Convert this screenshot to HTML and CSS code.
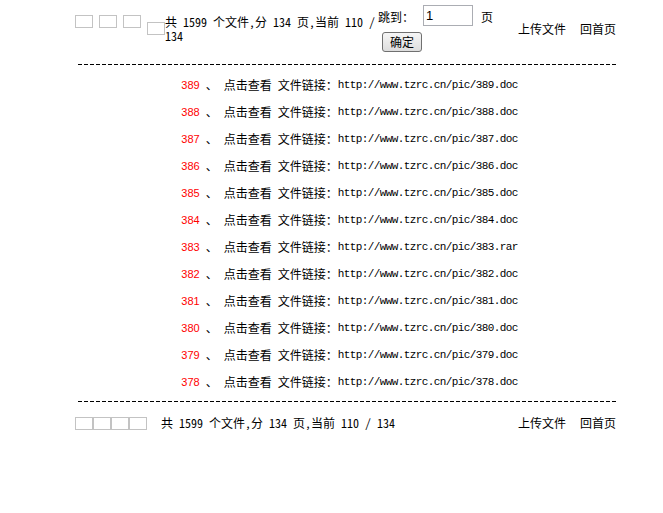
FILE: index.html
```html
<!DOCTYPE html>
<html>
<head>
<meta charset="utf-8">
<title>文件列表</title>
<link rel="stylesheet" href="styles.css">
</head>
<body>
<div class="page">
  <div class="top">
    <div class="pager">
      <span class="img"></span><span class="img"></span><span class="img"></span><span class="img low"></span>
      <span class="info">共 1599 个文件,分 134 页,当前 110 / 134</span>
    </div>
    <form class="jump">
      <div class="jump-line">
        <span class="lab">跳到：</span>
        <input class="page-input" type="text" value="1">
        <span class="lab ye">页</span>
      </div>
      <button class="ok" type="button">确定</button>
    </form>
    <div class="links">
      <a class="lnk">上传文件</a><a class="lnk">回首页</a>
    </div>
  </div>

  <div class="dash"></div>

  <div class="list">
    <div class="row"><span class="num">389</span><span class="sp">、</span><span class="act">点击查看</span><span class="lbl">文件链接：</span><span class="url">http://www.tzrc.cn/pic/389.doc</span></div>
    <div class="row"><span class="num">388</span><span class="sp">、</span><span class="act">点击查看</span><span class="lbl">文件链接：</span><span class="url">http://www.tzrc.cn/pic/388.doc</span></div>
    <div class="row"><span class="num">387</span><span class="sp">、</span><span class="act">点击查看</span><span class="lbl">文件链接：</span><span class="url">http://www.tzrc.cn/pic/387.doc</span></div>
    <div class="row"><span class="num">386</span><span class="sp">、</span><span class="act">点击查看</span><span class="lbl">文件链接：</span><span class="url">http://www.tzrc.cn/pic/386.doc</span></div>
    <div class="row"><span class="num">385</span><span class="sp">、</span><span class="act">点击查看</span><span class="lbl">文件链接：</span><span class="url">http://www.tzrc.cn/pic/385.doc</span></div>
    <div class="row"><span class="num">384</span><span class="sp">、</span><span class="act">点击查看</span><span class="lbl">文件链接：</span><span class="url">http://www.tzrc.cn/pic/384.doc</span></div>
    <div class="row"><span class="num">383</span><span class="sp">、</span><span class="act">点击查看</span><span class="lbl">文件链接：</span><span class="url">http://www.tzrc.cn/pic/383.rar</span></div>
    <div class="row"><span class="num">382</span><span class="sp">、</span><span class="act">点击查看</span><span class="lbl">文件链接：</span><span class="url">http://www.tzrc.cn/pic/382.doc</span></div>
    <div class="row"><span class="num">381</span><span class="sp">、</span><span class="act">点击查看</span><span class="lbl">文件链接：</span><span class="url">http://www.tzrc.cn/pic/381.doc</span></div>
    <div class="row"><span class="num">380</span><span class="sp">、</span><span class="act">点击查看</span><span class="lbl">文件链接：</span><span class="url">http://www.tzrc.cn/pic/380.doc</span></div>
    <div class="row"><span class="num">379</span><span class="sp">、</span><span class="act">点击查看</span><span class="lbl">文件链接：</span><span class="url">http://www.tzrc.cn/pic/379.doc</span></div>
    <div class="row"><span class="num">378</span><span class="sp">、</span><span class="act">点击查看</span><span class="lbl">文件链接：</span><span class="url">http://www.tzrc.cn/pic/378.doc</span></div>
  </div>

  <div class="dash"></div>

  <div class="bottom">
    <div class="boxes"><span class="bimg"></span><span class="bimg"></span><span class="bimg"></span><span class="bimg"></span></div>
    <span class="binfo">共 1599 个文件,分 134 页,当前 110 / 134</span>
    <div class="links blinks">
      <a class="lnk">上传文件</a><a class="lnk">回首页</a>
    </div>
  </div>
</div>
</body>
</html>
```

FILE: styles.css
```css
html, body {
  margin: 0;
  padding: 0;
  background: #ffffff;
}
body {
  font-family: "Noto Sans Mono CJK SC", "Noto Sans CJK SC", monospace;
  font-size: 12px;
  color: #000000;
}
.page {
  width: 545px;
  margin-left: 75px;
}
.top {
  display: flex;
  align-items: flex-start;
}
.pager {
  display: flex;
  align-items: flex-start;
  width: 302px;
}
.img {
  display: block;
  width: 16px;
  height: 11px;
  border: 1px solid #c3c3c3;
  margin-top: 15px;
  margin-right: 6px;
  flex: none;
}
.img.low {
  margin-top: 22px;
  margin-right: 0;
}
.info {
  display: block;
  width: 212px;
  margin-top: 15px;
  line-height: 14px;
  white-space: normal;
}
.jump {
  margin: 0 0 0 1px;
  display: flex;
  flex-direction: column;
  align-items: flex-start;
}
.jump-line {
  display: flex;
  align-items: flex-start;
  margin-top: 5px;
}
.lab {
  line-height: 14px;
  margin-top: 5px;
}
.page-input {
  width: 50px;
  height: 21px;
  box-sizing: border-box;
  margin: 0 0 0 9px;
  padding: 0 2px;
  border: 1px solid #abadb3;
  font-family: "Liberation Sans", sans-serif;
  font-size: 13px;
  color: #000;
}
.ye {
  margin-left: 8px;
}
.ok {
  margin: 6px 0 0 4px;
  width: 40px;
  height: 20px;
  padding: 0;
  border: 1px solid #707070;
  border-radius: 3px;
  background: linear-gradient(#f6f6f6, #dddddd);
  font-family: "Noto Sans CJK SC", sans-serif;
  font-size: 12px;
  line-height: 18px;
  color: #000;
}
.links {
  display: flex;
  margin-left: auto;
  margin-right: 4px;
  margin-top: 22px;
  line-height: 14px;
}
.lnk {
  color: #000;
  text-decoration: none;
}
.lnk + .lnk {
  margin-left: 14px;
}
.dash {
  margin-left: 3px;
  width: 539px;
  height: 1px;
  background: repeating-linear-gradient(to right, #000 0, #000 4px, transparent 4px, transparent 6px);
}
.top + .dash {
  margin-top: 12px;
}
.list {
  margin-top: 6px;
  margin-bottom: 6px;
  padding-left: 4px;
}
.row {
  display: flex;
  justify-content: center;
  align-items: center;
  height: 27px;
  line-height: 14px;
  white-space: nowrap;
}
.num {
  color: #ff0000;
  font-family: "Liberation Sans", sans-serif;
  font-size: 11px;
  margin-right: 6px;
}
.sp {
  margin-right: 6px;
}
.act {
  margin-right: 6px;
}
.url {
  font-family: "Liberation Mono", monospace;
  font-size: 11px;
  letter-spacing: -0.6px;
}
.bottom {
  display: flex;
  align-items: center;
  margin-top: 14px;
  height: 14px;
}
.boxes {
  display: flex;
}
.bimg {
  display: block;
  width: 16px;
  height: 11px;
  border: 1px solid #c3c3c3;
}
.binfo {
  margin-left: 14px;
  line-height: 14px;
}
.blinks {
  margin-top: 0;
}
```
